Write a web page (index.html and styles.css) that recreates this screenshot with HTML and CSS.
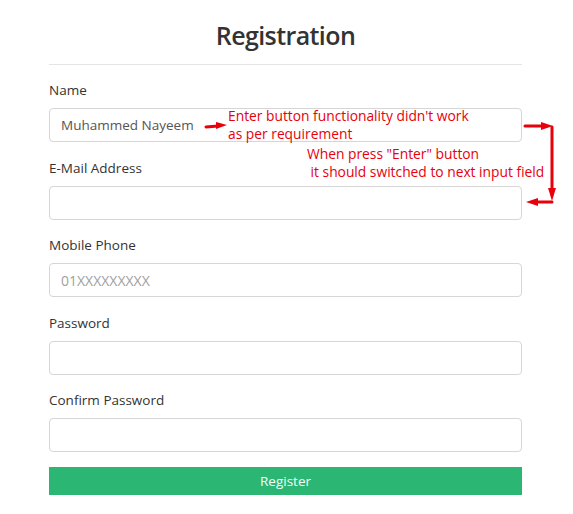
FILE: index.html
```html
<!DOCTYPE html>
<html>
<head>
<meta charset="utf-8">
<link rel="stylesheet" href="styles.css">
</head>
<body>
<div class="page">
  <div class="card">
    <h1 class="title">Registration</h1>
    <hr class="divider">
    <form class="form">
      <div class="field">
        <label class="label">Name</label>
        <input class="input" type="text" value="Muhammed Nayeem">
      </div>
      <div class="field">
        <label class="label">E-Mail Address</label>
        <input class="input" type="email">
      </div>
      <div class="field">
        <label class="label">Mobile Phone</label>
        <input class="input input-phone" type="text" placeholder="01XXXXXXXXX">
      </div>
      <div class="field">
        <label class="label">Password</label>
        <input class="input" type="password">
      </div>
      <div class="field">
        <label class="label">Confirm Password</label>
        <input class="input" type="password">
      </div>
      <button class="btn" type="button">Register</button>
    </form>
  </div>
  <div class="note note-1">Enter button functionality didn't work<br>as per requirement</div>
  <div class="note note-2">When press "Enter" button<br>&nbsp;it should switched to next input field</div>
  <svg class="arrows" width="573" height="514" viewBox="0 0 573 514">
    <g stroke="#e8000b" stroke-width="3" fill="#e8000b" stroke-linecap="round">
      <line x1="206" y1="127" x2="218" y2="126"/>
      <polygon points="216,122 227,125 216,129" stroke="none"/>
      <line x1="525" y1="126" x2="543" y2="126"/>
      <polygon points="541,122 553,126 541,130" stroke="none"/>
      <line x1="552" y1="127" x2="552" y2="192"/>
      <polygon points="548,188 552,201 556,188" stroke="none"/>
      <line x1="552" y1="202" x2="536" y2="202"/>
      <polygon points="538,198 526,202 538,206" stroke="none"/>
    </g>
  </svg>
</div>
</body>
</html>
```
FILE: styles.css
```css
* { box-sizing: border-box; }
html, body { margin: 0; padding: 0; background: #fff; }
body { font-family: "Open Sans", "Noto Sans", sans-serif; color: #333; }
.page { position: relative; width: 573px; height: 514px; }
.card { width: 473px; margin-left: 49px; padding-top: 17px; }
.title {
  margin: 0;
  text-align: center;
  font-size: 25px;
  line-height: 36px;
  font-weight: 600;
  color: #333;
  letter-spacing: -0.6px;
}
.divider { margin: 11px 0 0; border: 0; border-top: 1px solid #e5e5e5; }
.form { display: flex; flex-direction: column; padding-top: 15px; }
.field { display: flex; flex-direction: column; margin-bottom: 15.5px; }
.label { font-size: 13.5px; line-height: 20px; margin-bottom: 8px; color: #333; }
.input {
  height: 34px;
  border: 1px solid #d6d6d6;
  border-radius: 4px;
  padding: 0 11px;
  font-family: inherit;
  font-size: 13.5px;
  color: #555;
  background: #fff;
  outline: none;
}
.input-phone { font-size: 14px; }
.input::placeholder { color: #a0a0a0; }
.btn {
  height: 28px;
  border: 0;
  background: #2bb673;
  color: #f2fff7;
  font-family: inherit;
  font-size: 13.5px;
  padding: 0;
  margin-top: -1px;
}
.note {
  position: absolute;
  color: #e8000b;
  font-size: 13.8px;
  line-height: 18px;
}
.note-1 { left: 228px; top: 107px; }
.note-2 { left: 307px; top: 145px; }
.arrows { position: absolute; left: 0; top: 0; pointer-events: none; }
```
